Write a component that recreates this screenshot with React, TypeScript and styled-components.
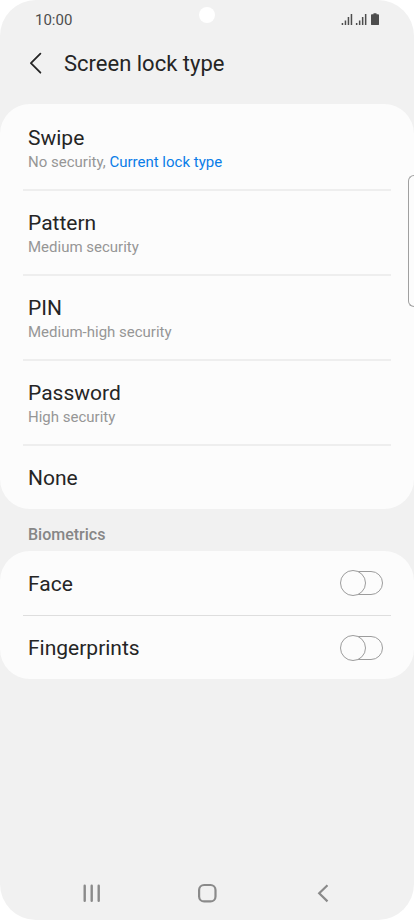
import React from "react";
import styled, { createGlobalStyle } from "styled-components";

const GlobalStyle = createGlobalStyle`
  *, *::before, *::after { box-sizing: border-box; }
  body { margin: 0; background: #fff; font-family: Roboto, "Liberation Sans", sans-serif; }
  button { font: inherit; color: inherit; background: none; border: 0; padding: 0; cursor: pointer; }
`;

const Screen = styled.div`
  position: relative;
  display: flex;
  flex-direction: column;
  min-height: 100vh;
  background: #f1f1f1;
  border-radius: 36px;
  overflow: hidden;
`;

const StatusBar = styled.div`
  display: flex;
  align-items: center;
  justify-content: space-between;
  height: 40px;
  padding: 0 34px 0 35px;
  color: #4d4d4d;
  font-size: 15px;
  line-height: 20px;
`;

const StatusIcons = styled.svg`
  display: block;
  width: 40px;
  height: 16px;
`;

const Camera = styled.span`
  position: absolute;
  top: 7px;
  left: 50%;
  width: 16px;
  height: 16px;
  margin-left: -8px;
  border-radius: 50%;
  background: #fff;
`;

const EdgeHandle = styled.span`
  position: absolute;
  top: 175px;
  right: 0;
  width: 6px;
  height: 132px;
  border: 1px solid #a0a0a0;
  border-right: 0;
  border-radius: 6px 0 0 6px;
`;

const Header = styled.header`
  display: flex;
  align-items: center;
  gap: 16px;
  height: 64px;
  padding: 0 24px 16px;
`;

const BackButton = styled.button`
  display: grid;
  place-items: center;
  width: 24px;
  height: 24px;
`;

const Title = styled.h1`
  margin: 0;
  color: #252525;
  font-size: 22px;
  font-weight: 400;
  line-height: 28px;
`;

const Card = styled.section<{ $inset?: number }>`
  padding: ${({ $inset = 0 }) => $inset}px 23px 0;
  background: #fcfcfc;
  border-radius: 30px;
`;

const Row = styled.div<{ $line: number }>`
  display: flex;
  align-items: center;
  justify-content: space-between;
  border-bottom: ${({ $line }) => $line}px solid ${({ $line }) => ($line === 1 ? "#dedede" : "#eeeeee")};
  &:last-child { border-bottom: 0; }
`;

const Option = styled.button`
  display: flex;
  flex-direction: column;
  flex: 1;
  padding: 19px 5px 18px;
  text-align: left;
`;

const OptionName = styled.span`
  color: #252525;
  font-size: 21px;
  line-height: 26px;
`;

const OptionDetail = styled.span`
  color: #969696;
  font-size: 15px;
  line-height: 22px;
  margin-bottom: -2px;
`;

const Current = styled.span`
  color: #0a7de8;
`;

const SectionTitle = styled.h2`
  margin: 0;
  padding: 16px 28px 6px;
  color: #868686;
  font-size: 16px;
  font-weight: 500;
  line-height: 20px;
`;

const SwitchLabel = styled.label`
  flex: 1;
  padding: 20px 5px 18px;
  color: #252525;
  font-size: 21px;
  line-height: 26px;

  ${Row}:last-child > & { padding-top: 19px; }
`;

const Switch = styled.input`
  appearance: none;
  position: relative;
  width: 42px;
  height: 24px;
  margin: 0 8px 0 0;
  border: 1px solid #9c9c9c;
  border-radius: 12px;
  cursor: pointer;

  &::before {
    content: "";
    position: absolute;
    top: -2px;
    left: -2px;
    width: 26px;
    height: 26px;
    border: 1px solid #9c9c9c;
    border-radius: 50%;
    background: #fcfcfc;
  }
  &:checked { background: #0a7de8; }
  &:checked::before { left: 16px; }
`;

const NavBar = styled.nav`
  display: grid;
  grid-template-columns: repeat(3, 1fr);
  height: 54px;
  margin-top: auto;
  padding: 0 34px;
`;

const NavButton = styled.button`
  display: grid;
  place-items: center;
`;

const lockTypes = [
  { name: "Swipe", detail: "No security", current: true },
  { name: "Pattern", detail: "Medium security" },
  { name: "PIN", detail: "Medium-high security" },
  { name: "Password", detail: "High security" },
  { name: "None" },
];

const biometrics = ["Face", "Fingerprints"];

export default function App() {
  return (
    <>
      <GlobalStyle />
      <Screen>
        <StatusBar>
          <span>10:00</span>
          <StatusIcons viewBox="0 0 40 16" fill="#4d4d4d" aria-hidden="true">
            <g id="signal">
              <rect x="1.7" y="11" width="1.5" height="2" />
              <rect x="4.7" y="8.5" width="1.5" height="4.5" />
              <rect x="7.7" y="5" width="1.5" height="8" />
              <rect x="10.7" y="2" width="1.5" height="11" />
            </g>
            <use href="#signal" x="14.2" />
            <path d="M33.5 1.2h3v1h1.6q.9 0 .9.9v9.1q0 .9-.9.9h-6.2q-.9 0-.9-.9v-9.1q0-.9.9-.9h1.6z" />
          </StatusIcons>
        </StatusBar>
        <Camera />
        <Header>
          <BackButton aria-label="Back">
            <svg width="24" height="24" viewBox="0 0 24 24" fill="none" stroke="#252525" strokeWidth="1.8" strokeLinecap="round" strokeLinejoin="round">
              <path d="M16.4 1.7 6.9 11.2l9.5 9.5" />
            </svg>
          </BackButton>
          <Title>Screen lock type</Title>
        </Header>
        <main>
          <Card $inset={2}>
            {lockTypes.map(({ name, detail, current }) => (
              <Row key={name} $line={2}>
                <Option>
                  <OptionName>{name}</OptionName>
                  {detail && (
                    <OptionDetail>
                      {detail}
                      {current && <>, <Current>Current lock type</Current></>}
                    </OptionDetail>
                  )}
                </Option>
              </Row>
            ))}
          </Card>
          <SectionTitle>Biometrics</SectionTitle>
          <Card>
            {biometrics.map((name) => (
              <Row key={name} $line={1}>
                <SwitchLabel htmlFor={name}>{name}</SwitchLabel>
                <Switch type="checkbox" role="switch" id={name} />
              </Row>
            ))}
          </Card>
        </main>
        <NavBar>
          <NavButton aria-label="Recent apps">
            <svg width="20" height="20" viewBox="0 0 20 20" stroke="#8a8a8a" strokeWidth="2.4" strokeLinecap="round">
              <path d="M2.7 2.7v15M9.7 2.7v15M16.7 2.7v15" />
            </svg>
          </NavButton>
          <NavButton aria-label="Home">
            <svg width="20" height="20" viewBox="0 0 20 20" fill="none" stroke="#8a8a8a" strokeWidth="2.2">
              <rect x="2.1" y="2" width="16.4" height="16.4" rx="5" />
            </svg>
          </NavButton>
          <NavButton aria-label="Back">
            <svg width="20" height="20" viewBox="0 0 20 20" fill="none" stroke="#8a8a8a" strokeWidth="2.2">
              <path d="M15.5 2.2 7.2 10.3l8.3 8.1" />
            </svg>
          </NavButton>
        </NavBar>
        <EdgeHandle />
      </Screen>
    </>
  );
}
